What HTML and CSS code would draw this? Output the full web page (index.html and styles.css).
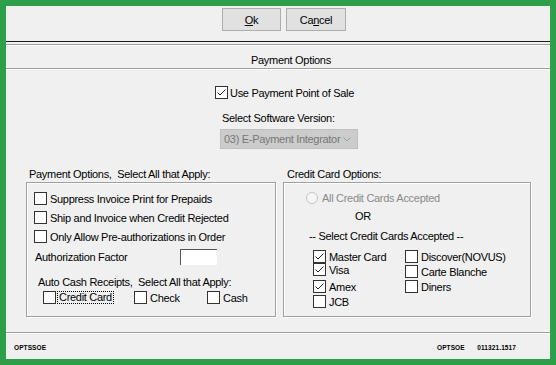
FILE: index.html
```html
<!DOCTYPE html>
<html>
<head>
<meta charset="utf-8">
<title>Payment Options</title>
<link rel="stylesheet" href="styles.css">
</head>
<body>
<div class="window">
  <div class="toolbar">
    <button class="btn btn-ok"><u>O</u>k</button>
    <button class="btn btn-cancel">Ca<u>n</u>cel</button>
  </div>
  <div class="rule-black"></div>
  <div class="rule-groove"></div>
  <div class="section-title">Payment Options</div>
  <div class="rule-groove"></div>

  <div class="main">
    <div class="chk pos">
      <span class="box"><svg viewBox="0 0 11 11" width="11" height="11"><polyline points="1.5,5.5 4,8 9.5,2.5" fill="none" stroke="#222" stroke-width="1"/></svg></span>
      <span>Use Payment Point of Sale</span>
    </div>
    <div class="version-label">Select Software Version:</div>
    <div class="select">
      <span>03) E-Payment Integrator</span>
      <svg viewBox="0 0 8 5" width="8" height="5"><polyline points="0.5,0.5 4,4 7.5,0.5" fill="none" stroke="#9a9a9a" stroke-width="1"/></svg>
    </div>

    <div class="groups">
      <div class="group group-left">
        <div class="group-label">Payment Options,&nbsp; Select All that Apply:</div>
        <div class="group-box">
          <div class="chk opt-row"><span class="box"></span><span>Suppress Invoice Print for Prepaids</span></div>
          <div class="chk opt-row"><span class="box"></span><span>Ship and Invoice when Credit Rejected</span></div>
          <div class="chk opt-row"><span class="box"></span><span>Only Allow Pre-authorizations in Order</span></div>
          <div class="auth-row">
            <span class="auth-label">Authorization Factor</span>
            <span class="auth-input"></span>
          </div>
          <div class="auto-label">Auto Cash Receipts,&nbsp; Select All that Apply:</div>
          <div class="auto-row">
            <div class="chk auto-item auto-cc"><span class="box"></span><span class="focus">Credit Card</span></div>
            <div class="chk auto-item auto-check"><span class="box"></span><span>Check</span></div>
            <div class="chk auto-item"><span class="box"></span><span>Cash</span></div>
          </div>
        </div>
      </div>

      <div class="group group-right">
        <div class="group-label">Credit Card Options:</div>
        <div class="group-box">
          <div class="radio-row"><span class="radio"></span><span>All Credit Cards Accepted</span></div>
          <div class="or">OR</div>
          <div class="select-cc">-- Select Credit Cards Accepted --</div>
          <div class="cc-grid">
            <div class="cc-col cc-col1">
              <div class="chk cc"><span class="box"><svg viewBox="0 0 11 11" width="11" height="11"><polyline points="1.5,5.5 4,8 9.5,2.5" fill="none" stroke="#222" stroke-width="1"/></svg></span><span>Master Card</span></div>
              <div class="chk cc"><span class="box"><svg viewBox="0 0 11 11" width="11" height="11"><polyline points="1.5,5.5 4,8 9.5,2.5" fill="none" stroke="#222" stroke-width="1"/></svg></span><span>Visa</span></div>
              <div class="chk cc cc-gap4"><span class="box"><svg viewBox="0 0 11 11" width="11" height="11"><polyline points="1.5,5.5 4,8 9.5,2.5" fill="none" stroke="#222" stroke-width="1"/></svg></span><span>Amex</span></div>
              <div class="chk cc cc-gap2"><span class="box"></span><span>JCB</span></div>
            </div>
            <div class="cc-col">
              <div class="chk cc"><span class="box"></span><span>Discover(NOVUS)</span></div>
              <div class="chk cc cc-gap2"><span class="box"></span><span>Carte Blanche</span></div>
              <div class="chk cc cc-gap2"><span class="box"></span><span>Diners</span></div>
            </div>
          </div>
        </div>
      </div>
    </div>
  </div>

  <div class="footer">
    <span>OPTSSOE</span>
    <div class="footer-right">
      <span class="footer-code">OPTSOE</span>
      <span>011321.1517</span>
    </div>
  </div>
</div>
</body>
</html>
```

FILE: styles.css
```css
* { box-sizing: border-box; }

body {
  margin: 0;
  font-family: "Liberation Sans", Arial, sans-serif;
  font-size: 11px;
  letter-spacing: -0.3px;
  color: #000;
}

.window {
  width: 556px;
  height: 365px;
  border: 6px solid #2e9f49;
  background: #f0f0f0;
  display: flex;
  flex-direction: column;
}

.toolbar {
  height: 35px;
  padding: 2px 0 0 216px;
  display: flex;
  gap: 5px;
  align-items: flex-start;
}

.btn {
  height: 23px;
  padding: 0;
  border: 1px solid #adadad;
  background: #e1e1e1;
  font: inherit;
  letter-spacing: inherit;
  color: #000;
}

.btn-ok { width: 59px; }
.btn-cancel { width: 60px; }

.rule-black {
  height: 1px;
  background: #1a1a1a;
  margin-bottom: 2px;
}

.rule-groove {
  height: 2px;
  border-top: 1px solid #a0a0a0;
  border-bottom: 1px solid #ffffff;
}

.section-title {
  height: 22px;
  padding: 8px 0 0 245px;
  line-height: 13px;
}

.main {
  display: flex;
  flex-direction: column;
  align-items: flex-start;
}

.chk {
  display: flex;
  align-items: center;
  gap: 3px;
  height: 13px;
  white-space: nowrap;
}

.box {
  flex: none;
  width: 13px;
  height: 13px;
  border: 1px solid #333333;
  background: #ffffff;
  display: flex;
}

.pos {
  margin: 16px 0 0 209px;
  gap: 2px;
}

.version-label {
  margin: 13px 0 0 216px;
  line-height: 13px;
}

.select {
  margin: 4px 0 0 214px;
  width: 138px;
  height: 20px;
  background: #cccccc;
  border: 1px solid #bfbfbf;
  color: #777777;
  display: flex;
  align-items: center;
  justify-content: space-between;
  padding: 0 6px 0 3px;
}

.groups {
  display: flex;
  gap: 7px;
  margin: 19px 0 0 20px;
}

.group-label {
  height: 14px;
  line-height: 13px;
  padding-left: 3px;
  white-space: nowrap;
}

.group-right .group-label { padding-left: 4px; }

.group-box {
  height: 135px;
  border: 1px solid #a0a0a0;
  box-shadow: inset 1px 1px 0 #ffffff, 1px 1px 0 #ffffff;
}

.group-left .group-box {
  width: 250px;
  padding: 9px 0 0 7px;
}

.group-right .group-box {
  width: 248px;
}

.opt-row { margin-bottom: 6px; }

.auth-row {
  display: flex;
  align-items: center;
  height: 16px;
  margin-top: 3px;
  padding-left: 1px;
}

.auth-label { width: 145px; }

.auth-input {
  width: 37px;
  height: 16px;
  background: #ffffff;
  border-left: 1px solid #555555;
  border-top: 1px solid #555555;
}

.auto-label {
  margin: 11px 0 0 4px;
  line-height: 13px;
  white-space: nowrap;
}

.auto-row {
  display: flex;
  align-items: center;
  height: 13px;
  margin-top: 2px;
  padding-left: 9px;
}

.auto-cc { width: 91px; gap: 1px; }
.auto-check { width: 73px; }

.focus {
  line-height: 11px;
  border: 1px dotted #000000;
  padding: 0 1px;
}

.radio-row {
  display: flex;
  align-items: center;
  gap: 4px;
  height: 13px;
  margin: 8px 0 0 22px;
  color: #8a8a8a;
}

.radio {
  width: 12px;
  height: 12px;
  border-radius: 50%;
  border: 1px solid #c4c4c4;
  background: #f6f6f6;
}

.or {
  margin: 6px 0 0 71px;
  line-height: 13px;
}

.select-cc {
  margin: 7px 0 0 25px;
  line-height: 13px;
}

.cc-grid {
  display: flex;
  margin: 7px 0 0 29px;
}

.cc-col1 { width: 92px; }

.cc-gap2 { margin-top: 2px; }
.cc-gap4 { margin-top: 4px; }

.footer {
  margin-top: auto;
  height: 27px;
  border-top: 1px solid #a0a0a0;
  box-shadow: inset 0 1px 0 #ffffff;
  display: flex;
  align-items: center;
  padding: 2px 34px 0 8px;
  font-size: 6.5px;
  font-weight: bold;
  letter-spacing: 0.1px;
}

.footer-right {
  margin-left: auto;
  width: 79px;
  display: flex;
}

.footer-code { width: 43px; }
```
